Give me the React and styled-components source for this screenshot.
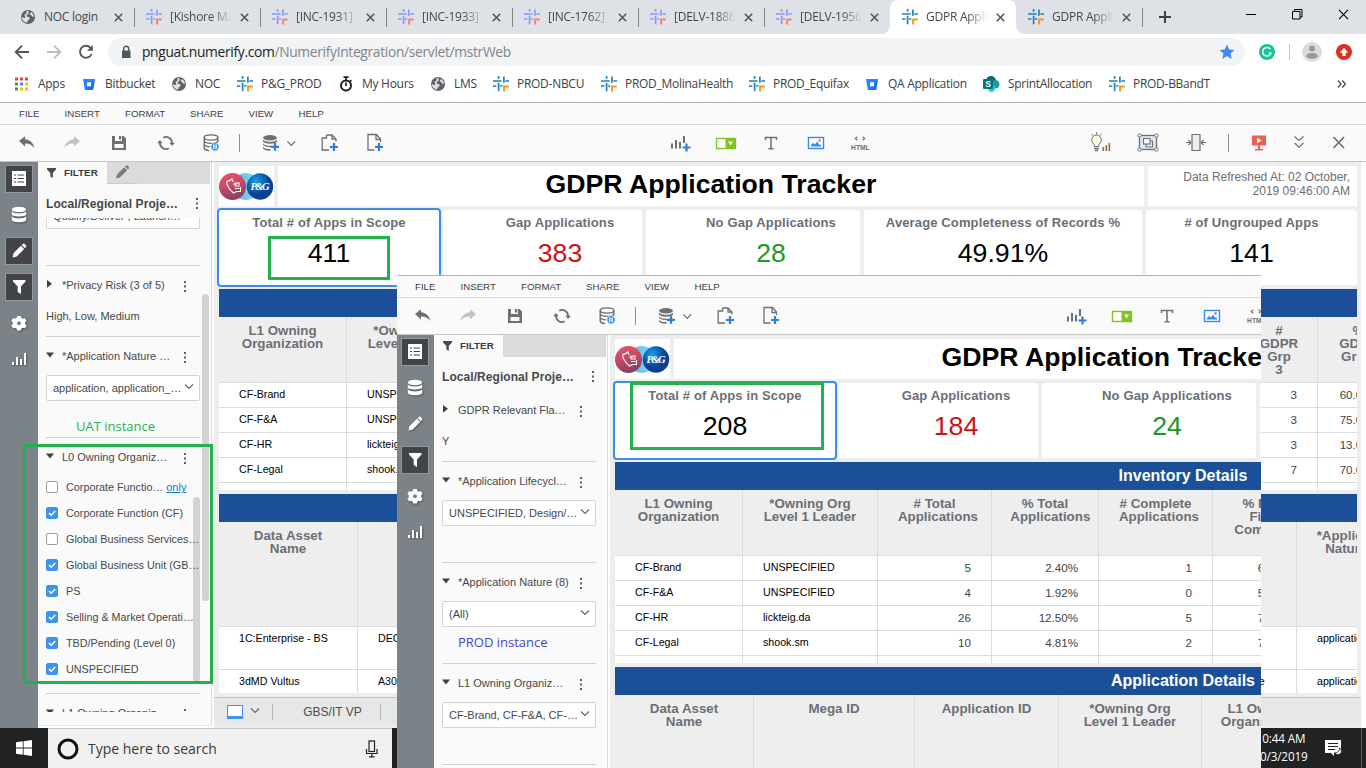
import React from "react";
import styled, { createGlobalStyle, css } from "styled-components";

const Global = createGlobalStyle`
  *, *::before, *::after { box-sizing: border-box; }
  html, body { margin: 0; padding: 0; }
  body { width: 1366px; height: 768px; overflow: hidden; background: #fff; font-family: "Liberation Sans", Arial, sans-serif; }
  svg { display: block; flex: none; }
`;

const segoe = `"Open Sans", "Noto Sans", sans-serif`;

/* ---------- Page ---------- */
const Page = styled.div`
  position: relative;
  width: 1366px;
  height: 768px;
  overflow: hidden;
  display: flex;
  flex-direction: column;
`;

/* ---------- Browser chrome ---------- */
const TabStrip = styled.div`
  height: 34px;
  flex: none;
  background: #dee1e6;
  display: flex;
  padding-left: 8px;
  font-family: ${segoe};
`;
const Tab = styled.div`
  position: relative;
  width: 126px;
  height: 34px;
  padding-left: 12px;
  display: flex;
  align-items: center;
  ${(p) => p.$divider && css`
    &::after { content: ""; position: absolute; right: -1px; top: 8px; width: 1px; height: 19px; background: #82868b; }
  `}
  ${(p) => p.$active && css`
    background: #fff;
    border-radius: 8px 8px 0 0;
    &::before, &::after { content: ""; position: absolute; bottom: 0; width: 8px; height: 8px; }
    &::before { left: -8px; background: radial-gradient(circle at 0 0, #dee1e6 7.5px, #fff 8px); }
    &::after { right: -8px; background: radial-gradient(circle at 100% 0, #dee1e6 7.5px, #fff 8px); }
  `}
`;
const TabTitle = styled.span`
  width: 62px;
  margin-left: 8px;
  font-size: 12px;
  letter-spacing: -0.25px;
  line-height: 18px;
  color: #45494d;
  white-space: nowrap;
  overflow: hidden;
  ${(p) => p.$fade && css`mask-image: linear-gradient(90deg, #000 66%, transparent 100%);`}
`;
const TabClose = styled.span`
  margin-left: 8px;
`;
const NewTab = styled.div`
  width: 46px;
  display: flex;
  align-items: center;
  justify-content: center;
`;
const WindowControls = styled.div`
  margin-left: auto;
  display: flex;
  height: 28px;
`;
const WindowButton = styled.div`
  width: 46px;
  display: flex;
  align-items: center;
  justify-content: center;
`;
const AddressRow = styled.div`
  height: 36px;
  flex: none;
  display: flex;
  align-items: center;
  padding-left: 14px;
  background: #fff;
`;
const NavIcon = styled.div`
  width: 16px;
  margin-right: 16px;
`;
const Omnibox = styled.div`
  width: 1137px;
  height: 28px;
  margin-left: -2px;
  border-radius: 14px;
  background: #f1f3f4;
  display: flex;
  align-items: center;
  padding: 0 10px 0 12px;
  font: 13.8px/20px ${segoe};
  color: #80868b;
  svg:last-child { margin-left: auto; }
`;
const Url = styled.span`
  margin-left: 10px;
  letter-spacing: -0.32px;
  b { font-weight: 400; color: #202124; }
`;
const Extensions = styled.div`
  display: flex;
  align-items: center;
  padding-left: 14px;
`;
const ExtDivider = styled.div`
  width: 1px;
  height: 16px;
  background: #c6c8cb;
  margin: 0 12px 0 14px;
`;
const BookmarkBar = styled.div`
  height: 32px;
  flex: none;
  display: flex;
  align-items: center;
  padding: 0 0 4px 13px;
  background: #fff;
  font: 12px/18px ${segoe};
  color: #3c4043;
`;
const Bookmark = styled.div`
  width: ${(p) => p.$w}px;
  flex: none;
  display: flex;
  align-items: center;
  gap: 8px;
  white-space: nowrap;
  letter-spacing: -0.28px;
`;
const Overflow = styled.div`
  margin-left: auto;
  width: 30px;
`;

/* ---------- Workbench ---------- */
const Bench = styled.div`
  position: relative;
  width: 1366px;
  height: ${(p) => p.$h}px;
  flex: none;
  display: flex;
  flex-direction: column;
  background: #fff;
`;
const MenuBar = styled.div`
  height: 23px;
  flex: none;
  background: #fafafa;
  border-top: 1px solid #b3b3b3;
  border-bottom: 1px solid #dadada;
  display: flex;
  align-items: center;
  padding-left: 19px;
  font-size: 9.7px;
  color: #3f4042;
`;
const MenuItem = styled.span`
  width: ${(p) => p.$w}px;
`;
const Toolbar = styled.div`
  height: 37px;
  flex: none;
  display: flex;
  align-items: center;
  background: #fafafa;
  border-bottom: 1px solid #c6c6c6;
`;
const Tool = styled.div`
  width: ${(p) => p.$w || 24}px;
  height: 24px;
  flex: none;
  margin-left: ${(p) => p.$gap}px;
`;
const ToolDivider = styled.div`
  width: 1px;
  height: 18px;
  flex: none;
  margin-left: ${(p) => p.$gap}px;
  background: #8f8f8f;
`;
const Body = styled.div`
  flex: 1;
  min-height: 0;
  display: flex;
`;
const Rail = styled.div`
  width: 38px;
  flex: none;
  background: #7c8388;
  padding: 3px 0 0 5px;
  display: flex;
  flex-direction: column;
  gap: 8px;
`;
const RailButton = styled.div`
  width: 28px;
  height: 28px;
  flex: none;
  padding: 2px;
  ${(p) => p.$on
    ? css`background: #434447; box-shadow: inset 0 0 0 1px #94989b;`
    : css`filter: drop-shadow(1px 1px 1px rgba(0,0,0,.35));`}
`;
const FilterPanel = styled.div`
  position: relative;
  width: 174px;
  flex: none;
  height: ${(p) => p.$h}px;
  background: #fafafa;
  border-right: 1px solid #dcdcdc;
  border-bottom: 1px solid #e2e2e2;
  display: flex;
  flex-direction: column;
`;
const PanelTabs = styled.div`
  height: 22px;
  flex: none;
  display: flex;
  background: #dbdbdb;
  margin-right: 1px;
`;
const PanelTab = styled.div`
  width: 69px;
  background: #fafafa;
  display: flex;
  align-items: center;
  padding: 0 0 1px 9px;
  gap: 8px;
  font-size: 9.9px;
  font-weight: 700;
  color: #3b3c3e;
`;
const PanelEditTab = styled.div`
  width: 30px;
  padding: 2px 0 0 7px;
  border-bottom: 1px solid #cacaca;
`;
const PanelTitle = styled.div`
  height: 34px;
  flex: none;
  display: flex;
  align-items: center;
  justify-content: space-between;
  padding: 4px 12px 0 8px;
  font-size: 12px;
  font-weight: 700;
  letter-spacing: 0.06px;
  color: #46484b;
  white-space: nowrap;
  span { padding-top: 2px; }
`;
const ScrollArea = styled.div`
  height: ${(p) => p.$h}px;
  overflow: hidden;
  padding-left: 8px;
`;
const SectionList = styled.div`
  width: 154px;
  margin-top: ${(p) => p.$shift}px;
`;
const Section = styled.div`
  position: relative;
  height: ${(p) => p.$h}px;
  border-bottom: 1px solid #d2d2d2;
  font-size: 11px;
  color: #46484b;
`;
const SectionHead = styled.div`
  height: 38px;
  display: flex;
  align-items: center;
  white-space: nowrap;
`;
const SectionName = styled.span`
  width: 119px;
  margin-left: 8px;
`;
const SectionValue = styled.div`
  height: 24px;
  line-height: 24px;
`;
const Select = styled.div`
  height: 26px;
  border: 1px solid #d4d4d4;
  border-radius: 2px;
  background: #fff;
  display: flex;
  align-items: center;
  justify-content: space-between;
  padding: 0 5px 0 6px;
  white-space: nowrap;
`;
const CheckList = styled.div`
  margin-top: -2px;
`;
const CheckRow = styled.div`
  position: relative;
  z-index: 1;
  height: 26px;
  display: flex;
  align-items: center;
  gap: 8px;
  white-space: nowrap;
  font-size: 10.8px;
  a { color: #0d7cc4; text-decoration: underline; margin-left: -5px; font-size: 11px; }
`;
const Box = styled.span`
  width: 12px;
  height: 12px;
  flex: none;
  border-radius: 2px;
  border: 1px solid ${(p) => (p.$on ? "#3d93ee" : "#9c9c9c")};
  background: ${(p) => (p.$on ? "#3d93ee" : "#fff")};
  svg { margin: -1px; }
`;
const Thumb = styled.div`
  position: absolute;
  right: ${(p) => p.$right}px;
  top: ${(p) => p.$top}px;
  width: 7px;
  height: ${(p) => p.$h}px;
  border-radius: 4px;
  background: #d3d3d3;
`;

const Dashboard = styled.div`
  width: 1147px;
  margin-left: 2px;
  background: #ededed;
  display: flex;
  flex-direction: column;
`;
const Canvas = styled.div`
  height: 535px;
  flex: none;
  width: 1143px;
  padding: 4px 0 0 5px;
  display: flex;
  flex-direction: column;
`;
const TitleRow = styled.div`
  height: 40px;
  flex: none;
  display: flex;
  gap: 4px;
`;
const Card = styled.div`
  width: ${(p) => p.$w}px;
  flex: none;
  background: #fff;
`;
const LogoCard = styled(Card)`
  padding-top: 6px;
`;
const HeadingCard = styled(Card)`
  text-align: center;
  font-size: 26.67px;
  line-height: 37px;
  font-weight: 700;
  color: #000;
`;
const RefreshCard = styled(Card)`
  padding: 4px 7px 0 30px;
  text-align: right;
  font-size: 12px;
  line-height: 14px;
  color: #6b6e76;
  white-space: nowrap;
`;
const KpiRow = styled.div`
  display: flex;
  gap: 4px;
  height: 75px;
  flex: none;
  margin-top: 4px;
`;
const Kpi = styled.div`
  width: ${(p) => p.$w}px;
  flex: none;
  padding: 5px 0 0 ${(p) => p.$pad || 0}px;
  background: #fff;
  border-radius: 2px;
  text-align: center;
  box-shadow: ${(p) => (p.$selected ? "0 0 0 2px #3c8fe9" : "none")};
  display: flex;
  flex-direction: column;
`;
const KpiName = styled.span`
  font-size: 13px;
  line-height: 15px;
  font-weight: 700;
  letter-spacing: 0.13px;
  color: #6b6e76;
  white-space: nowrap;
`;
const KpiValue = styled.span`
  margin-top: 7px;
  font-size: 26.67px;
  line-height: 32px;
  color: ${(p) => p.$color || "#000"};
`;
const Band = styled.div`
  height: 28px;
  flex: none;
  margin-top: 4px;
  width: 1138px;
  padding-right: 2px;
  background: #1b5099;
  color: #fff;
  font-size: 16px;
  font-weight: 700;
  line-height: 27px;
  text-align: center;
`;
const Grid = styled.div`
  height: ${(p) => p.$h}px;
  flex: none;
  width: 1138px;
  overflow: hidden;
  background: #fff;
`;
const GridRow = styled.div`
  display: flex;
  width: max-content;
  height: ${(p) => p.$h}px;
`;
const HeadCell = styled.div`
  width: ${(p) => p.$w}px;
  flex: none;
  padding-top: 7px;
  background: #eee;
  border-right: 1px solid #dcdcdc;
  border-bottom: 1px solid #dcdcdc;
  text-align: center;
  font-size: 13.33px;
  line-height: 13px;
  font-weight: 700;
  color: #6b6e76;
  white-space: pre;
`;
const Cell = styled.div`
  width: ${(p) => p.$w}px;
  flex: none;
  padding: 0 20px;
  border-right: 1px solid #dcdcdc;
  border-bottom: 1px solid #dcdcdc;
  line-height: 23px;
  font-size: ${(p) => (p.$num ? 11.6 : 10.67)}px;
  text-align: ${(p) => (p.$num ? "right" : "left")};
  color: ${(p) => (p.$num ? "#444" : "#000")};
  white-space: nowrap;
`;
const SheetBar = styled.div`
  height: 28px;
  flex: none;
  background: #e6e8e7;
  border-top: 1px solid #c2c4c3;
  display: flex;
  align-items: center;
  padding-left: 13px;
  gap: 7px;
  font-size: 12px;
  color: #4a4c4f;
`;
const SheetName = styled.span`
  height: 16px;
  width: 109px;
  margin-left: 5px;
  padding-left: 12px;
  text-align: center;
  line-height: 16px;
  border-left: 1px solid #b5b7b6;
  border-right: 1px solid #b5b7b6;
`;

/* Second window, floating over the first */
const FloatingWindow = styled.div`
  position: absolute;
  left: 397px;
  top: 275px;
  width: 864px;
  height: 493px;
  overflow: hidden;
  ${Bench} { margin-left: -1px; }
`;
const Marker = styled.div`
  position: absolute;
  left: ${(p) => p.$x}px;
  top: ${(p) => p.$y}px;
  width: ${(p) => p.$w}px;
  height: ${(p) => p.$h}px;
  border: 3px solid #22b14c;
`;
const Note = styled.div`
  position: absolute;
  left: ${(p) => p.$x}px;
  top: ${(p) => p.$y}px;
  font: 13px/18px ${segoe};
  color: ${(p) => p.$color};
  white-space: nowrap;
`;

/* ---------- Taskbar ---------- */
const Taskbar = styled.div`
  height: 40px;
  flex: none;
  background: #202224;
  display: flex;
`;
const Start = styled.div`
  width: 48px;
  display: flex;
  align-items: center;
  justify-content: center;
`;
const Search = styled.div`
  width: 344px;
  background: #f1f1f1;
  border-top: 1px solid #c4c4c4;
  display: flex;
  align-items: center;
  padding: 0 13px 0 9px;
  font: 14px/20px ${segoe};
  color: #3a3a3a;
  span { flex: 1; margin-left: 9px; }
`;
const Tray = styled.div`
  margin-left: auto;
  display: flex;
  align-items: center;
  color: #fff;
  font: 11.7px/18px ${segoe};
  letter-spacing: -0.15px;
  text-align: center;
  white-space: pre;
`;
const Clock = styled.div`
  width: 72px;
  padding: 0 3px 2px 0;
`;
const TrayIcon = styled.div`
  width: 43px;
  padding-left: 7px;
`;
const ShowDesktop = styled.div`
  width: 5px;
  height: 40px;
  border-left: 1px solid #5c5e60;
`;

/* ---------- Icons ---------- */
const Cross = ({ s = 9, c = "#54585c", w = 1.6 }) => (
  <svg width={s} height={s} viewBox="0 0 9 9" stroke={c} strokeWidth={w} fill="none"><path d="M.8.8l7.4 7.4M8.2.8L.8 8.2" /></svg>
);
const Globe = () => (
  <svg width="16" height="16" viewBox="0 0 16 16"><circle cx="8" cy="8" r="7" fill="#5f6368" /><path d="M8.2 1.8c-.2 1.2.8 1.500.6 2.500-.3 1.200-1.800.9-2.200 2-.3 1 .6 1.700 1.800 1.600 1.300 0 1.600 1.200.9 2.200-.8 1-1.900 1.200-2.300 3.600C3.900 13.100 1.800 11 1.800 8c1.500.4 2.600 1.700 3.400.8.700-.8-1.200-1.900-.4-3.100.7-1 1.700-.6 1.900-1.700.1-.8-.3-1-.2-1.800z" fill="#dfe1e5" /><path d="M10.800 3c1.800.9 3 2.600 3.200 4.600-1 .5-1.800.3-2.200-.6-.5-1-1.600-.7-1.800-1.900-.1-.9.9-1 .8-2.100z" fill="#dfe1e5" /></svg>
);
const Hash = ({ soft }) => {
  const b = soft ? "#869af7" : "#2380bb";
  const o = soft ? "#f5866c" : "#f7941e";
  return (
    <svg width="16" height="16" viewBox="0 0 16 16" fill="none" strokeWidth="1.7" stroke={b}>
      <path d="M0 5h8.700M5.600 0v2.800M10.900.5v6.300M12.400 5H16M0 10h3.400M5.600 6.800v8.400M7 10h2.200" />
      <path d="M11.100 15.500v-5h4.600" stroke={o} strokeWidth="2" />
    </svg>
  );
};
const AppsIcon = () => (
  <svg width="17" height="16" viewBox="0 0 17 16">
    {["#ea4335", "#ea4335", "#ea4335", "#34a053", "#4285f4", "#fbbc05", "#34a053", "#fbbc05", "#fbbc05"].map((c, i) => (
      <rect key={i} x={2 + (i % 3) * 5} y={1.5 + Math.floor(i / 3) * 5} width="3" height="3" fill={c} />
    ))}
  </svg>
);
const Bucket = () => (
  <svg width="16" height="16" viewBox="0 0 16 16"><path d="M2 3h12l-1.800 11H3.800z" fill="#2684ff" /><path d="M9 9.800L14 3l-1.800 11H5z" fill="#0d5fd8" opacity=".5" /><rect x="6" y="6.300" width="4" height="4" fill="#fff" /></svg>
);
const Stopwatch = () => (
  <svg width="16" height="16" viewBox="0 0 16 16" fill="none" stroke="#1d1d1d" strokeWidth="2"><circle cx="8" cy="9.500" r="5" /><path d="M5.500 1.200h5M8 1v3M12 4.200l1.400 1.200M8 6.500v3.500" strokeWidth="1.700" /></svg>
);
const SharePoint = () => (
  <svg width="17" height="16" viewBox="0 0 17 16"><circle cx="8" cy="5" r="5" fill="#036c70" /><circle cx="12.300" cy="8.300" r="4.200" fill="#1a9ba1" /><circle cx="8.600" cy="12.500" r="3.400" fill="#37c6d0" /><rect x="0" y="3" width="10" height="10" rx="1" fill="#03787c" /><text x="5" y="11" fontSize="8.500" fontWeight="700" fill="#fff" textAnchor="middle" fontFamily="Liberation Sans">S</text></svg>
);
const Dots = () => (
  <svg width="4" height="13" viewBox="0 0 4 13" fill="#5c5f62"><path d="M1 1h2v2H1zM1 5.500h2v2H1zM1 10h2v2H1z" /></svg>
);
const LowDots = () => (
  <svg width="8" height="17" viewBox="0 0 8 17" fill="#5c5f62"><path d="M3 4h2v2H3zM3 8.500h2v2H3zM3 13h2v2H3z" /></svg>
);
const Caret = ({ open }) => (
  <svg width="8" height="11" viewBox="0 0 8 11" fill="#3e4144">{open ? <path d="M0 1.500h8L4 6.500z" /> : <path d="M1 0l5 3.800-5 3.900z" />}</svg>
);
const Chevron = ({ c = "#66696c" }) => (
  <svg width="10" height="10" viewBox="0 0 10 10" fill="none" stroke={c} strokeWidth="1.200"><path d="M1 1.500l4 4 4-4" /></svg>
);
const Funnel = () => (
  <svg width="9" height="10" viewBox="0 0 9 10" fill="#4b4d50"><path d="M0 0h9v1.600L5.800 5v5L3.300 8.600V5L0 1.600z" /></svg>
);
const PencilGlyph = ({ c = "#fff" }) => (
  <svg width="24" height="24" viewBox="0 0 24 24" fill={c}><path d="M5.500 18.500l1-4.300 7.400-7.400 3.200 3.200-7.400 7.400zM14.700 6l1.100-1.100q1.100-.7 2 .2l1.100 1.100q.8 1 0 1.900L17.900 9.200z" /></svg>
);

const G = "#6d7073";
const B = "#2d7fdc";
const Svg24 = ({ children }) => (
  <svg width="24" height="24" viewBox="0 0 24 24" fill="none" stroke={G} strokeWidth="1.400">{children}</svg>
);
const Plus = ({ x, y }) => <path d={`M${x - 4} ${y}h8M${x} ${y - 4}v8`} stroke={B} strokeWidth="2.200" />;
const Undo = () => <Svg24><path d="M4 10l6-4.800v3c5.400.7 8.300 3.600 9.300 8.800-2-3-4.800-4.700-9.300-4.600v3z" fill={G} stroke="none" /></Svg24>;
const Redo = () => <Svg24><path d="M20 10l-6-4.800v3c-5.400.7-8.500 3.600-10 8.800 2.300-3 5.500-4.700 10-4.600v3z" fill="#c1c2c3" stroke="none" /></Svg24>;
const Save = () => <Svg24><path d="M5 5h3v5h7V5h1.500L19 7.500V19H5z" fill={G} stroke="none" /><path d="M12 5h2.200v3.500H12z" fill={G} stroke="none" /><path d="M7.500 13h9v4h-9z" fill="#fafafa" stroke="none" /></Svg24>;
const Refresh = () => <Svg24><path d="M9.200 6.700A6 6 0 0 1 18 12.600M14.800 17.300A6 6 0 0 1 6 11.400" strokeWidth="1.800" /><path d="M15.300 11.800h5.600L18.100 15zM3.100 12.200h5.600L5.900 9z" fill={G} stroke="none" /></Svg24>;
const DbPause = () => <Svg24><ellipse cx="12" cy="6.500" rx="6.800" ry="2.600" /><path d="M5.200 6.500v10.500q.5 2.200 5 2.600M18.800 6.500v5M5.200 10q1 2.200 6.800 2.400t6.800-2.400M5.200 13.500q1 2 5.500 2.300" /><circle cx="16" cy="15.800" r="4.200" fill="#2f8cf0" stroke="#fafafa" strokeWidth=".8" /><path d="M14.800 13.500v4.600M17.200 13.500v4.600" stroke="#fff" /></Svg24>;
const DbPlus = () => <Svg24><ellipse cx="11" cy="6.800" rx="7" ry="2.700" fill={G} stroke="none" /><path d="M4 8.500c1 3 13 3 14 0v2.300c-2 2.500-12 2.500-14 0zM4 12.300c1 2 5 2.700 8 2.500v1.300c-3 .2-7-.5-8-2.300zM4 15.500c1 2 4 2.700 7.500 2.500v1.600c-3.500.2-7-.6-7.500-2.400z" fill={G} stroke="none" /><Plus x={16} y={15.8} /></Svg24>;
const DocsPlus = () => <Svg24><path d="M9.500 4h5.500l4 4v2.500M15 4v4h4M9.500 4v3H5.200v12H12" strokeWidth="1.300" /><Plus x={17} y={16} /></Svg24>;
const DocPlus = () => <Svg24><path d="M11.500 19H5V3.500h8.500L17.500 8v3M13 4v4.500h4" strokeWidth="1.300" /><Plus x={16} y={16} /></Svg24>;
const ChartPlus = () => <Svg24><path d="M3 12.500v5M7 9v8.500M11 11v6.500M15 5v7" strokeWidth="2" /><Plus x={17.5} y={16.5} /></Svg24>;
const Selector = () => <Svg24><rect x="2.500" y="7.500" width="19" height="10" stroke="#82c41f" fill="#fff" /><path d="M11.500 7h10v11h-10z" fill="#82c41f" stroke="none" /><path d="M14 10.500h5l-2.500 4z" fill="#fff" stroke="none" /></Svg24>;
const TextTool = () => <Svg24><path d="M6.500 9V6.500h11V9M12 6.500v11M9.500 17.700h5" strokeWidth="1.500" /></Svg24>;
const ImageTool = () => <Svg24><rect x="4.500" y="6.500" width="15" height="11" stroke="#2f8cf0" fill="#fff" /><path d="M7 15.500v-1.500l2-2 2 1.500 2-3 2 3 2 .5v1.500z" fill="#2f8cf0" stroke="none" /><circle cx="15.500" cy="9.500" r="1.200" fill="#f05a4a" stroke="none" /></Svg24>;
const HtmlTool = () => <Svg24><path d="M9.300 5.700L7.300 7.500l2 1.800M14.700 5.700l2 1.800-2 1.800" strokeWidth="1.200" /><text x="12.400" y="19" fontSize="6.700" fontWeight="700" fill={G} stroke="none" textAnchor="middle" fontFamily="Liberation Sans">HTML</text></Svg24>;
const Bulb = () => <Svg24><path d="M8.500 1.200v2.500M3.500 3l1.800 1.800M13.500 3l-1.800 1.800" strokeWidth="1" /><path d="M6.500 15.500q0-2-1.400-3.300a4.800 4.800 0 1 1 6.800 0q-1.400 1.300-1.400 3.300z" fill="#fbfae4" strokeWidth="1" /><path d="M6 17.500h5M7 19.500h3" strokeWidth="1.400" /><path d="M15.300 16v4M18.300 14v6M21.300 12v8" stroke="#8b7434" strokeWidth="1.600" /></Svg24>;
const Group = () => <Svg24><rect x="3.500" y="4.500" width="17" height="14" fill="#dde9f8" strokeWidth="1.300" /><rect x="7.500" y="7.500" width="6.500" height="5.500" strokeWidth="1.100" fill="#fff" /><path d="M10 13v3h6.500v-6H14" strokeWidth="1.100" /><g fill="#fff" strokeWidth="1"><circle cx="3.500" cy="4.500" r="1.700" /><circle cx="20.500" cy="4.500" r="1.700" /><circle cx="3.500" cy="18.500" r="1.700" /><circle cx="20.500" cy="18.500" r="1.700" /></g></Svg24>;
const Fit = () => <Svg24><path d="M8 3.500h8v16H8z" fill="#eee" strokeWidth="1.200" /><path d="M2 11.500h4.500M22 11.500h-4.500M4.500 9l2.300 2.500L4.500 14M19.500 9l-2.300 2.500 2.300 2.500" strokeWidth="1.200" /></Svg24>;
const Present = () => <Svg24><path d="M5 4.500h14v10H5zM11 14h2v4h3v1.500H8V18h3z" fill="#ea5f50" stroke="none" /><path d="M10 6.800l4.500 2.700-4.500 2.700z" fill="#fff" stroke="none" /></Svg24>;
const Chevrons = () => <Svg24><path d="M7.500 5.500l4.500 4 4.500-4M7.500 12l4.500 4.200 4.500-4.200" strokeWidth="1.200" /></Svg24>;
const BigX = () => <Svg24><path d="M6.500 6l10.500 11M17 6L6.500 17" strokeWidth="1.700" /></Svg24>;
const SmallDown = () => <svg width="12" height="24" viewBox="0 0 12 24" fill="none" stroke={G} strokeWidth="1.200"><path d="M2.500 10.500l3.800 3.800 3.800-3.800" /></svg>;

const tools = [
  [15, Undo], [21, Redo], [23, Save], [23, Refresh], [21, DbPause], [16, null], [19, DbPlus], [2, SmallDown, 12], [20, DocsPlus], [22, DocPlus],
  [282, ChartPlus], [21, Selector], [21, TextTool], [21, ImageTool], [20, HtmlTool],
  [216, Bulb], [24, Group], [24, Fit], [20, null], [18, Present], [16, Chevrons], [16, BigX],
];

const railIcons = {
  list: <svg width="24" height="24" viewBox="0 0 24 24"><path d="M5 4h14v15H5z" fill="#fff" /><path d="M7 8h2M7 11.500h2M7 15h2M10.500 8H17M10.500 11.500H17M10.500 15H17" stroke="#434447" strokeWidth="1.200" /></svg>,
  data: <svg width="24" height="24" viewBox="0 0 24 24" fill="#fff"><ellipse cx="12" cy="6.500" rx="7.200" ry="2.800" /><path d="M4.800 8.500c1.500 2.500 12.900 2.500 14.400 0v3.200c-1.500 2.300-12.900 2.300-14.400 0zM4.800 13.500c1.500 2.500 12.900 2.500 14.400 0V17c-1.500 2.900-12.900 2.900-14.400 0z" /></svg>,
  edit: <PencilGlyph />,
  filter: <svg width="24" height="24" viewBox="0 0 24 24" fill="#fff"><path d="M6 5h12.500v1.500L14 11.500V19l-3.300-2v-5.500L6 6.500z" /></svg>,
  gear: <svg width="24" height="24" viewBox="0 0 24 24"><path d="M10.200 5h3.600l.6 2 1.500.8 2.100-.6 1.600 2.900-1.500 1.400v1.400l1.500 1.500-1.600 2.800-2.100-.5-1.500.9-.6 1.800h-3.600l-.6-1.800-1.500-.9-2.100.5-1.600-2.800 1.500-1.500v-1.400l-1.500-1.400L6 7.200l2.100.6L9.600 7z" fill="#fff" /><circle cx="12" cy="12.300" r="2" fill="#7c8388" /></svg>,
  bars: <svg width="24" height="24" viewBox="0 0 24 24" stroke="#fff" strokeWidth="2"><path d="M6 15v3M10 10v8M14 12v6M18 6v12" /></svg>,
};

/* ---------- Data ---------- */
const filtersA = [
  { h: 101, name: "*Application Lifecycl…", open: true, select: "Qualify/Deliver , Launch…" },
  { h: 71, name: "*Privacy Risk (3 of 5)", value: "High, Low, Medium" },
  { h: 101, name: "*Application Nature …", open: true, select: "application, application_…" },
  { h: 256, name: "L0 Owning Organiz…", open: true, checks: [
    ["Corporate Functio…", false, "only"], ["Corporate Function (CF)", true], ["Global Business Services…", false],
    ["Global Business Unit (GB…", true], ["PS", true], ["Selling & Market Operati…", true], ["TBD/Pending (Level 0)", true], ["UNSPECIFIED", true],
  ] },
  { h: 101, name: "L1 Owning Organiz…", open: true },
];
const filtersB = [
  { h: 71, name: "GDPR Relevant Fla…", value: "Y" },
  { h: 101, name: "*Application Lifecycl…", open: true, select: "UNSPECIFIED, Design/…" },
  { h: 101, name: "*Application Nature (8)", open: true, select: "(All)" },
  { h: 101, name: "L1 Owning Organiz…", open: true, select: "CF-Brand, CF-F&A, CF-…" },
];
const kpisA = ["411", "383", "28", "49.91%", "141"];
const kpisB = ["208", "184", "24", "", ""];
const kpiDefs = [
  { w: 220, name: "Total # of Apps in Scope", selected: true },
  { w: 199, pad: 35, name: "Gap Applications", color: "#cc1417" },
  { w: 214, pad: 36, name: "No Gap Applications", color: "#1b9a1f" },
  { w: 278, name: "Average Completeness of Records %" },
  { w: 211, name: "# of Ungrouped Apps" },
];
const inventoryCols = [
  [128, "L1 Owning\nOrganization"], [135, "*Owning Org\nLevel 1 Leader"], [114, "# Total\n  Applications", 1], [107, "% Total\n   Applications", 1],
  [114, "# Complete\n  Applications", 1], [105, " % Reqd\n  Fields\n  Completed", 1], [319, ""], [77, "#\nGDPR\nGrp\n3", 1], [82, "%\nGDPR\nGrp 3", 1],
];
const inventoryA = [
  ["CF-Brand", "UNSPECIFIED", "", "", "", "", "", "3", "60.00%"],
  ["CF-F&A", "UNSPECIFIED", "", "", "", "", "", "3", "75.00%"],
  ["CF-HR", "lickteig.da", "", "", "", "", "", "3", "13.04%"],
  ["CF-Legal", "shook.sm", "", "", "", "", "", "7", "70.00%"],
  ["", "", "", "", "", "", "", "", ""],
];
const inventoryB = [
  ["CF-Brand", "UNSPECIFIED", "5", "2.40%", "1", "65.00%", "", "", ""],
  ["CF-F&A", "UNSPECIFIED", "4", "1.92%", "0", "50.00%", "", "", ""],
  ["CF-HR", "lickteig.da", "26", "12.50%", "5", "72.00%", "", "", ""],
  ["CF-Legal", "shook.sm", "10", "4.81%", "2", "75.00%", "", "", ""],
  ["", "", "", "", "", "", "", "", ""],
];
const appCols = [
  [139, "Data Asset\nName"], [161, "Mega ID"], [144, "Application ID"], [143, "*Owning Org\nLevel 1 Leader"], [120, "L1 Owning\nOrganization"], [256, ""], [115, ""], [118, "*Application\nNature     "],
];
const appRows = [
  ["1C:Enterprise - BS", "DEC1042", "", "", "", "", "", "application"],
  ["3dMD Vultus", "A3012", "", "", "", "", "Infrastructure", "application"],
];

const DataGrid = ({ cols, rows, height, headHeight, rowHeight }) => (
  <Grid $h={height}>
    <GridRow $h={headHeight}>{cols.map(([w, t], i) => <HeadCell key={i} $w={w}>{t}</HeadCell>)}</GridRow>
    {rows.map((r, j) => (
      <GridRow key={j} $h={rowHeight}>{cols.map(([w, , num], i) => <Cell key={i} $w={w} $num={num}>{r[i]}</Cell>)}</GridRow>
    ))}
  </Grid>
);

const Logo = () => (
  <svg width="55" height="28" viewBox="0 0 55 28">
    <defs>
      <linearGradient id="pink" x1="0" y1="0" x2=".3" y2="1"><stop offset="0" stopColor="#f2506c" /><stop offset=".5" stopColor="#c94b66" /><stop offset="1" stopColor="#8d4262" /></linearGradient>
      <radialGradient id="navy" cx=".35" cy=".3"><stop offset="0" stopColor="#18a2e6" /><stop offset=".6" stopColor="#0a66bd" /><stop offset="1" stopColor="#0a3f92" /></radialGradient>
      <linearGradient id="sky"><stop offset="0" stopColor="#4db5e8" /><stop offset="1" stopColor="#9adcf5" /></linearGradient>
    </defs>
    <circle cx="27" cy="14.500" r="13.500" fill="url(#sky)" />
    <circle cx="13.500" cy="14.500" r="13.500" fill="url(#pink)" />
    <circle cx="41" cy="14.500" r="13.200" fill="url(#navy)" />
    <path d="M7.500 9.500q3.500-.5 5.500-2.500l1.200 3M7.500 9.500q.5 6 7 11.500l3.200-1.500M14.500 12.500l1.500-1 .5 2.500M17 13v-2h3v2M15.500 14h5.500M16 16.500h4.500M16.500 19.500h5v-4.500" fill="none" stroke="#fff" strokeWidth="1.100" />
    <text x="41" y="18" fontSize="10.500" fontWeight="700" fontStyle="italic" fill="#fff" textAnchor="middle" textLength="19" fontFamily="Liberation Serif">P&amp;G</text>
  </svg>
);

const Workbench = ({ height, filters, shift, panelHeight, scrollHeight, editTab, railOn, kpis, inventory, footer, thumbs }) => (
  <Bench $h={height}>
    <MenuBar>
      {[["FILE", 45.5], ["INSERT", 60.5], ["FORMAT", 65], ["SHARE", 58.5], ["VIEW", 50], ["HELP", 40]].map(([t, w]) => <MenuItem key={t} $w={w}>{t}</MenuItem>)}
    </MenuBar>
    <Toolbar>
      {tools.map(([gap, Icon, w], i) => (Icon ? <Tool key={i} $gap={gap} $w={w}><Icon /></Tool> : <ToolDivider key={i} $gap={gap} />))}
    </Toolbar>
    <Body>
      <Rail>
        {Object.keys(railIcons).map((k) => <RailButton key={k} $on={railOn.includes(k)}>{railIcons[k]}</RailButton>)}
      </Rail>
      <FilterPanel $h={panelHeight}>
        <PanelTabs>
          <PanelTab><Funnel />FILTER</PanelTab>
          {editTab && <PanelEditTab><svg width="16" height="17" viewBox="4 4 16 16"><path d="M6 18l1-4 7.200-7.200 2.900 2.900L9.900 17zM15 6l1-1q1-.6 1.800.2l1 1q.7.9 0 1.700l-1 1z" fill="#7b7b7b" /></svg></PanelEditTab>}
        </PanelTabs>
        <PanelTitle><span>Local/Regional Proje…</span><Dots /></PanelTitle>
        <ScrollArea $h={scrollHeight}>
          <SectionList $shift={shift}>
            {filters.map((f) => (
              <Section key={f.name + f.select} $h={f.h}>
                <SectionHead><Caret open={f.open} /><SectionName>{f.name}</SectionName><LowDots /></SectionHead>
                {f.value && <SectionValue>{f.value}</SectionValue>}
                {f.select && <Select>{f.select}<Chevron /></Select>}
                {f.checks && (
                  <CheckList>
                    {f.checks.map(([t, on, link]) => (
                      <CheckRow key={t}>
                        <Box $on={on}>{on && <svg width="12" height="12" viewBox="0 0 12 12" fill="none" stroke="#fff" strokeWidth="1.500"><path d="M3 6l2.200 2.200L9.200 4" /></svg>}</Box>
                        {t}{link && <a>{link}</a>}
                      </CheckRow>
                    ))}
                    <Thumb $right={0} $top={59} $h={185} />
                  </CheckList>
                )}
              </Section>
            ))}
          </SectionList>
        </ScrollArea>
        {thumbs && <Thumb $right={2} $top={132} $h={307} />}
      </FilterPanel>
      <Dashboard>
        <Canvas>
          <TitleRow>
            <LogoCard $w={55}><Logo /></LogoCard>
            <HeadingCard $w={866}>GDPR Application Tracker</HeadingCard>
            <RefreshCard $w={209}>Data Refreshed At: 02 October,<br />2019 09:46:00 AM</RefreshCard>
          </TitleRow>
          <KpiRow>
            {kpiDefs.map((k, i) => (
              <Kpi key={k.name} $w={k.w} $pad={k.pad} $selected={k.selected}><KpiName>{k.name}</KpiName><KpiValue $color={k.color}>{kpis[i]}</KpiValue></Kpi>
            ))}
          </KpiRow>
          <Band>Inventory Details</Band>
          <DataGrid cols={inventoryCols} rows={inventory} height={173} headHeight={66} rowHeight={25} />
          <Band>Application Details</Band>
          <DataGrid cols={appCols} rows={appRows} height={171} headHeight={105} rowHeight={43} />
        </Canvas>
        {footer && (
          <SheetBar>
            <svg width="16" height="14" viewBox="0 0 16 14"><rect x=".5" y=".5" width="15" height="13" fill="#fff" stroke="#3d93ee" /><path d="M0 11h16v3H0z" fill="#3d93ee" /></svg>
            <Chevron />
            <SheetName>GBS/IT VP</SheetName>
          </SheetBar>
        )}
      </Dashboard>
    </Body>
  </Bench>
);

const tabs = ["NOC login", "[Kishore Mani", "[INC-1931] Pr", "[INC-1933] Pr", "[INC-1762] Pr", "[DELV-1886]", "[DELV-1956]", "GDPR Applic", "GDPR Applic"];
const bookmarks = [
  ["Apps", 68, <AppsIcon />], ["Bitbucket", 90, <Bucket />], ["NOC", 66, <Globe />], ["P&G_PROD", 101, <Hash />], ["My Hours", 92, <Stopwatch />], ["LMS", 63, <Globe />],
  ["PROD-NBCU", 108, <Hash />], ["PROD_MolinaHealth", 148, <Hash />], ["PROD_Equifax", 115, <Hash />], ["QA Application", 119, <Bucket />], ["SprintAllocation", 126, <SharePoint />], ["PROD-BBandT", 110, <Hash />],
];

export default function App() {
  return (
    <Page>
      <Global />
      <TabStrip>
        {tabs.map((t, i) => (
          <Tab key={i} $active={i === 7} $divider={i !== 6 && i !== 7}>
            {i === 0 ? <Globe /> : <Hash soft={i < 7} />}
            <TabTitle $fade={i > 0}>{t}</TabTitle>
            <TabClose><Cross /></TabClose>
          </Tab>
        ))}
        <NewTab><svg width="12" height="12" viewBox="0 0 12 12" stroke="#3c4043" strokeWidth="2"><path d="M6 0v12M0 6h12" /></svg></NewTab>
        <WindowControls>
          <WindowButton><svg width="10" height="10" viewBox="0 0 10 10" stroke="#000"><path d="M0 5.500h10" /></svg></WindowButton>
          <WindowButton><svg width="11" height="11" viewBox="0 0 11 11" fill="none" stroke="#000"><path d="M.5 2.500h7.500v7.500H.5zM2.500 2.500V.5H10v7.500H8" /></svg></WindowButton>
          <WindowButton><Cross s={11} c="#000" w={0.9} /></WindowButton>
        </WindowControls>
      </TabStrip>
      <AddressRow>
        <NavIcon><svg width="16" height="16" viewBox="0 0 16 16" fill="none" stroke="#54585c" strokeWidth="1.900"><path d="M15 8H2.500M8 1.700L1.700 8 8 14.300" /></svg></NavIcon>
        <NavIcon><svg width="16" height="16" viewBox="0 0 16 16" fill="none" stroke="#bdbfc2" strokeWidth="1.900"><path d="M1 8h12.500M8 1.700L14.300 8 8 14.300" /></svg></NavIcon>
        <NavIcon><svg width="16" height="16" viewBox="0 0 16 16" fill="none" stroke="#54585c" strokeWidth="1.900"><path d="M13.600 10A6 6 0 1 1 12.300 3.600L14 5.300" /><path d="M14.800 1v5.800H9z" fill="#54585c" stroke="none" /></svg></NavIcon>
        <Omnibox>
          <svg width="12" height="14" viewBox="0 0 12 14"><path d="M2 5.500h8.500v7.500H2z" fill="#54585c" /><path d="M3.700 6V3.800a2.500 2.500 0 0 1 5 0V6" fill="none" stroke="#54585c" strokeWidth="1.400" /></svg>
          <Url><b>pnguat.numerify.com</b>/NumerifyIntegration/servlet/mstrWeb</Url>
          <svg width="16" height="16" viewBox="0 0 16 16" fill="#4285f4"><path d="M8 .5l2.200 5 5.300.5-4 3.600 1.200 5.300L8 12.100l-4.700 2.800 1.200-5.300-4-3.600 5.300-.5z" /></svg>
        </Omnibox>
        <Extensions>
          <svg width="16" height="16" viewBox="0 0 16 16"><circle cx="8" cy="8" r="8" fill="#15c39a" /><path d="M11.500 5.300A4.300 4.300 0 1 0 12 9.300H9.500" fill="none" stroke="#fff" strokeWidth="1.500" /></svg>
          <ExtDivider />
          <svg width="20" height="20" viewBox="0 0 20 20"><circle cx="10" cy="10" r="10" fill="#dcdcdc" /><circle cx="10" cy="6.500" r="3" fill="#9b9b9b" /><ellipse cx="10" cy="13.800" rx="5.800" ry="3" fill="#9b9b9b" /></svg>
          <svg width="30" height="16" viewBox="-14 0 30 16"><circle cx="8" cy="8" r="8" fill="#d93025" /><path d="M8 4l4.200 4.500H9.700V12H6.300V8.500H3.800z" fill="#fff" /></svg>
        </Extensions>
      </AddressRow>
      <BookmarkBar>
        {bookmarks.map(([t, w, icon]) => <Bookmark key={t} $w={w}>{icon}{t}</Bookmark>)}
        <Overflow><svg width="12" height="10" viewBox="0 0 12 10" fill="none" stroke="#54585c" strokeWidth="1.500"><path d="M2 1.500L5 5 2 8.500M6.300 1.500L9.300 5l-3 3.500" /></svg></Overflow>
      </BookmarkBar>

      <Workbench height={626} filters={filtersA} shift={-53} panelHeight={564} scrollHeight={494} editTab railOn={["list", "edit", "filter"]} kpis={kpisA} inventory={inventoryA} footer thumbs />

      <Taskbar>
        <Start><svg width="16" height="16" viewBox="0 0 16 16" fill="#fff"><path d="M0 2.200L6.800 1.300v6.300H0zM7.600 1.200L16 0v7.600H7.600zM0 8.400h6.800v6.300L0 13.800zM7.600 8.400H16V16l-8.400-1.200z" /></svg></Start>
        <Search>
          <svg width="22" height="22" viewBox="0 0 22 22"><circle cx="11" cy="11" r="9" fill="none" stroke="#111" strokeWidth="3" /></svg>
          <span>Type here to search</span>
          <svg width="14" height="18" viewBox="0 0 14 18" fill="none" stroke="#222" strokeWidth="1.200"><rect x="4" y="1" width="5.500" height="10.500" /><path d="M1.500 9v4.500h10.500V9M6.800 13.500V16.500M4 16.800h5.500" /></svg>
        </Search>
        <Tray>
          <Clock>{"10:44 AM\n10/3/2019"}</Clock>
          <TrayIcon><svg width="17" height="17" viewBox="0 0 17 17"><path d="M0 0h16v13h-7v3l-3-3H0z" fill="#fff" /><path d="M3 3.500h10M3 6.500h10M3 9.500h7" stroke="#202224" /><path d="M14.500 8a3.500 3.500 0 1 1-4.700 4.700 4 4 0 0 0 4.700-4.700z" fill="#fff" stroke="#202224" strokeWidth=".8" /></svg></TrayIcon>
          <ShowDesktop />
        </Tray>
      </Taskbar>

      <FloatingWindow>
        <Workbench height={626} filters={filtersB} shift={0} panelHeight={566} scrollHeight={494} railOn={["list", "filter"]} kpis={kpisB} inventory={inventoryB} />
      </FloatingWindow>

      <Marker $x={268} $y={236} $w={122} $h={44} />
      <Marker $x={23} $y={444} $w={190} $h={240} />
      <Marker $x={630} $y={382} $w={194} $h={68} />
      <Note $x={76} $y={417} $color="#2cae52">UAT instance</Note>
      <Note $x={458} $y={633} $color="#3f48cc">PROD instance</Note>
    </Page>
  );
}
